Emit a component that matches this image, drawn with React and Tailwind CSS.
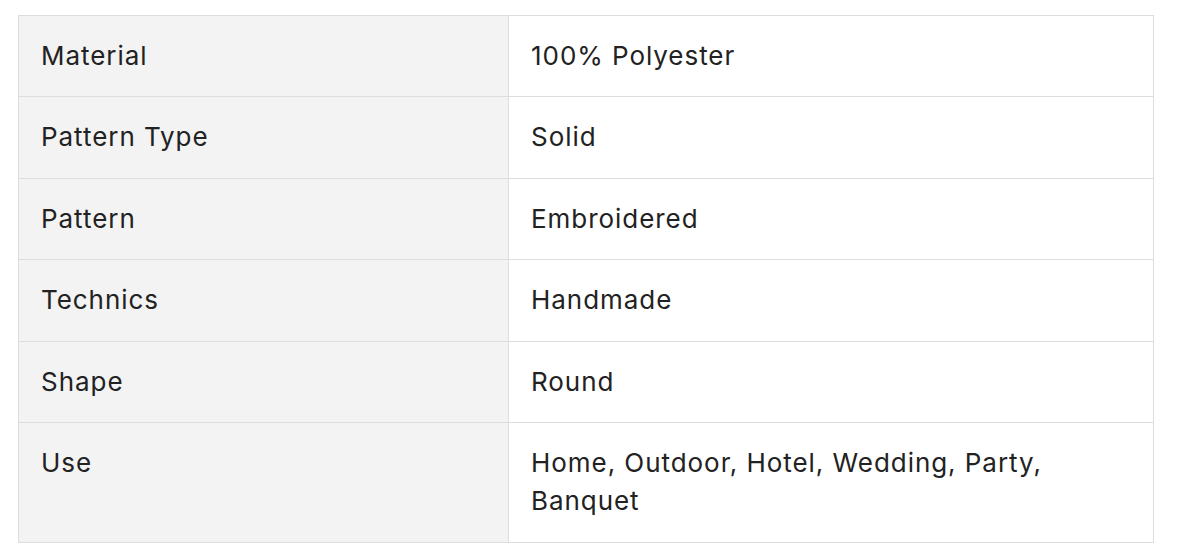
const rows = [
  ['Material', '100% Polyester'],
  ['Pattern Type', 'Solid'],
  ['Pattern', 'Embroidered'],
  ['Technics', 'Handmade'],
  ['Shape', 'Round'],
  ['Use', 'Home, Outdoor, Hotel, Wedding, Party, Banquet'],
]

export default function App() {
  return (
    <div className="min-h-screen bg-white pt-[15px] pl-[18px] font-['Inter',sans-serif] text-[26px] tracking-[0.95px] leading-[38.4px] text-[#222]">
      <table className="w-[1136px] border-collapse border border-[#dddddd] table-fixed">
        <colgroup>
          <col className="w-[490px]" />
          <col />
        </colgroup>
        <tbody>
          {rows.map(([label, value]) => (
            <tr key={label}>
              <td className="border border-[#dddddd] bg-[#f3f3f3] px-[22px] py-[21px] align-top">{label}</td>
              <td className="border border-[#dddddd] bg-white px-[22px] py-[21px] align-top pr-[80px]">{value}</td>
            </tr>
          ))}
        </tbody>
      </table>
    </div>
  )
}
